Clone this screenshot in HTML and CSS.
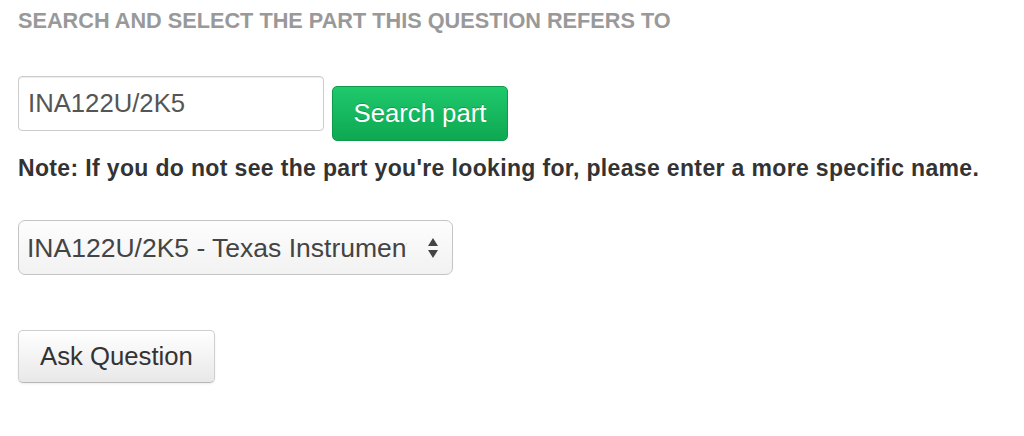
FILE: index.html
```html
<!DOCTYPE html>
<html lang="en">
<head>
    <meta charset="UTF-8">
    <title>Ask a question</title>
    <link rel="stylesheet" href="styles.css">
</head>
<body>
    <div class="part-form">
        <h4 class="section-title">Search and select the part this question refers to</h4>

        <div class="search-row">
            <input type="text" class="part-input" value="INA122U/2K5">
            <button class="btn btn-success">Search part</button>
        </div>

        <p class="note">Note: If you do not see the part you're looking for, please enter a more specific name.</p>

        <div class="select-wrap">
            <select class="part-select">
                <option>INA122U/2K5 - Texas Instruments</option>
            </select>
            <svg class="select-arrows" width="12" height="22" viewBox="0 0 12 22">
                <path d="M6 1 L11 9 L1 9 Z" fill="#444"/>
                <path d="M6 21 L11 13 L1 13 Z" fill="#444"/>
            </svg>
        </div>

        <button class="btn btn-default">Ask Question</button>
    </div>
</body>
</html>
```

FILE: styles.css
```css
body {
    margin: 0;
    background: #fff;
    font-family: "Liberation Sans", Arial, sans-serif;
    color: #333;
}

.part-form {
    padding: 8px 18px;
}

.section-title {
    margin: 0;
    font-size: 21.7px;
    font-weight: bold;
    text-transform: uppercase;
    color: #999;
}

.search-row {
    display: flex;
    align-items: flex-start;
    margin-top: 42px;
}

.part-input {
    box-sizing: border-box;
    width: 306px;
    height: 55px;
    padding: 0 9px;
    font-family: "Liberation Sans", Arial, sans-serif;
    font-size: 25.7px;
    color: #555;
    border: 1px solid #ccc;
    border-radius: 4px;
    box-shadow: inset 0 1px 1px rgba(0, 0, 0, 0.075);
}

.btn {
    box-sizing: border-box;
    height: 55px;
    font-family: "Liberation Sans", Arial, sans-serif;
    font-size: 25.7px;
    border-radius: 5px;
    cursor: pointer;
}

.btn-success {
    width: 176px;
    margin: 10px 0 0 8px;
    padding: 0;
    color: #fff;
    text-shadow: 0 -1px 0 rgba(0, 0, 0, 0.2);
    background: linear-gradient(#1fc96c, #0ea852);
    border: 1px solid #0d9a4b;
}

.note {
    margin: 14px 0 0;
    font-size: 23px;
    font-weight: bold;
    color: #333;
    letter-spacing: 0.35px;
}

.select-wrap {
    position: relative;
    width: 435px;
    margin-top: 38px;
}

.part-select {
    appearance: none;
    -webkit-appearance: none;
    box-sizing: border-box;
    width: 435px;
    height: 55px;
    padding: 0 45px 0 8px;
    font-family: "Liberation Sans", Arial, sans-serif;
    font-size: 26.5px;
    color: #444;
    background: linear-gradient(#fdfdfd, #f2f2f2);
    border: 1px solid #c4c4c4;
    border-radius: 7px;
}

.select-arrows {
    position: absolute;
    right: 14px;
    top: 17px;
}

.btn-default {
    display: block;
    width: 197px;
    height: 53px;
    margin-top: 55px;
    padding: 0;
    color: #333;
    background: linear-gradient(#ffffff, #e8e8e8);
    border: 1px solid #cfcfcf;
    border-bottom-color: #b8b8b8;
    border-radius: 5px;
    box-shadow: 0 1px 2px rgba(0, 0, 0, 0.08);
}
```
